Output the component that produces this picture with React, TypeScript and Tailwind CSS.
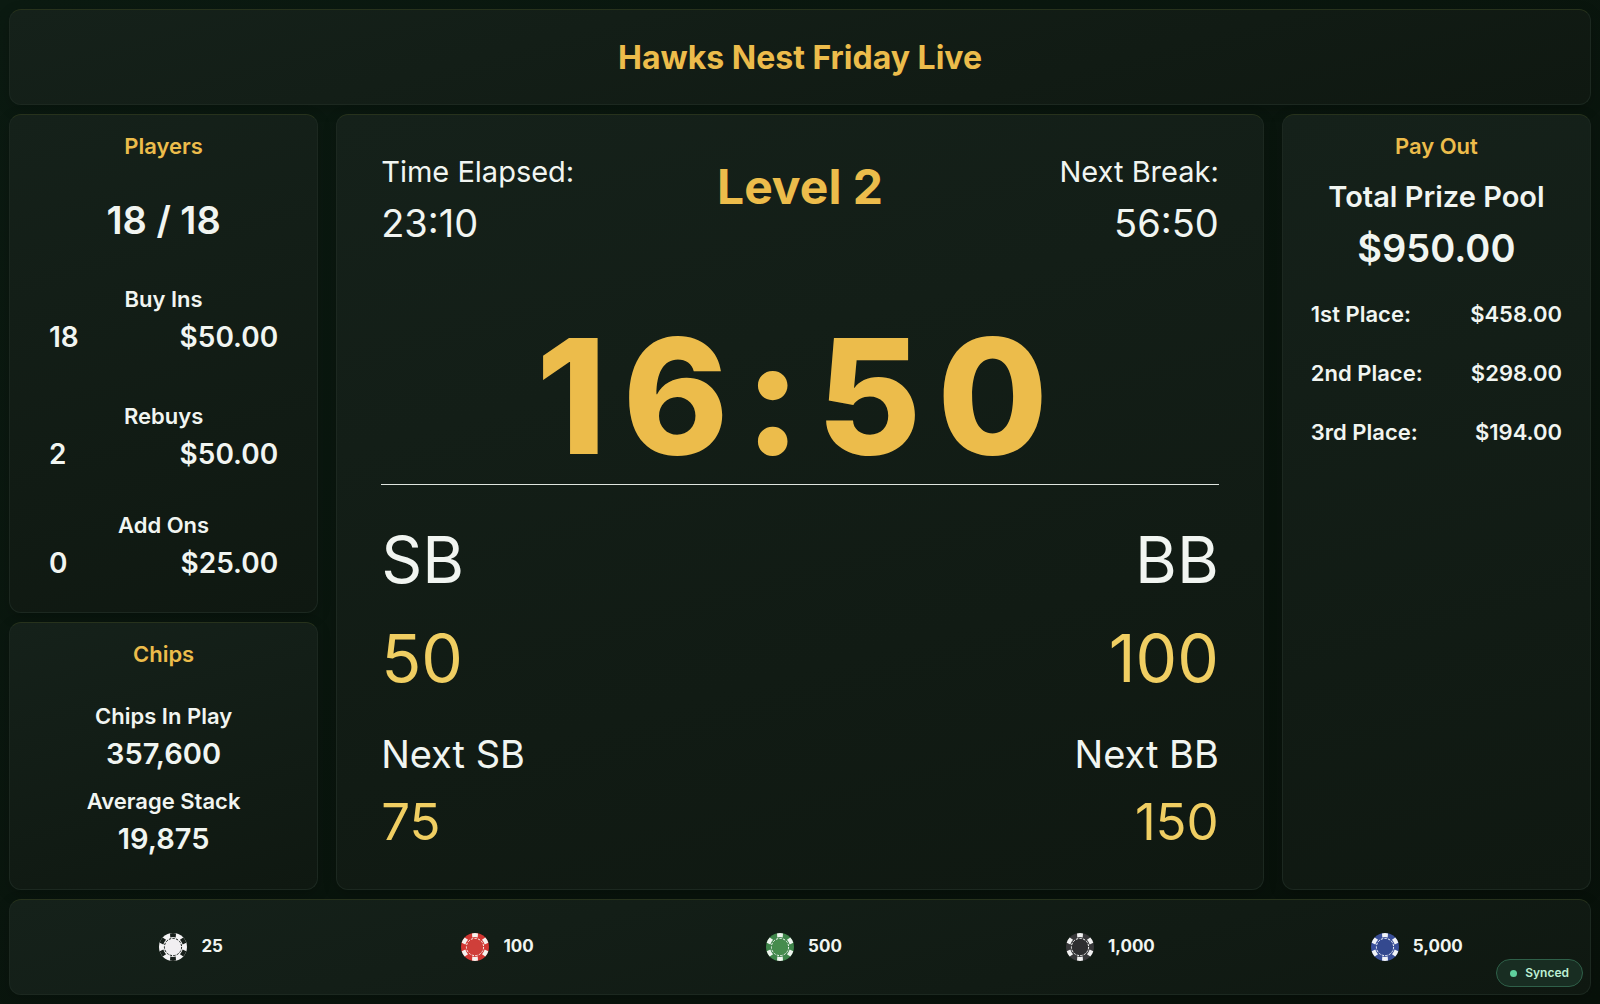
import type { ReactNode } from "react";

const stats = [
  { label: "Buy Ins", count: "18", amount: "$50.00", style: "mt-[38px]" },
  { label: "Rebuys", count: "2", amount: "$50.00", style: "mt-[41px]" },
  { label: "Add Ons", count: "0", amount: "$25.00", style: "mt-[33px]" },
];

const payouts = [
  { place: "1st Place:", amount: "$458.00" },
  { place: "2nd Place:", amount: "$298.00" },
  { place: "3rd Place:", amount: "$194.00" },
];

const chips = [
  { value: "25", body: "#f1eff1", edge: "#f5f4f5", mark: "#18201b" },
  { value: "100", body: "#cf3f3a", edge: "#d23632", mark: "#f6f1ee" },
  { value: "500", body: "#468c4d", edge: "#3f854a", mark: "#eef4ee" },
  { value: "1,000", body: "#2e2e30", edge: "#38383a", mark: "#f1f1f1" },
  { value: "5,000", body: "#34498f", edge: "#3a4f99", mark: "#f1f3f8" },
];

const Card = ({ children, style = "" }: { children: ReactNode; style?: string }) => (
  <section
    className={`rounded-xl border border-[#1c2820] border-t-[#27321c] bg-linear-165 from-[#15211a] to-[#0f1811] shadow-[0_4px_14px_rgba(0,0,0,0.2)] ${style}`}
  >
    {children}
  </section>
);

const CardTitle = ({ children }: { children: ReactNode }) => (
  <h2 className="text-center text-[22px] leading-8 font-semibold text-[#ecbc4b]">{children}</h2>
);

const ChipIcon = ({ body, edge, mark }: { body: string; edge: string; mark: string }) => (
  <svg viewBox="0 0 36 36" className="w-9 h-9" aria-hidden="true">
    <circle cx="18" cy="18" r="14" fill={edge} />
    {[0, 60, 120, 180, 240, 300].map((angle) => (
      <path
        key={angle}
        d="M15 4.4 Q18 3.6 21 4.4 L20.7 8.4 Q18 7.8 15.3 8.4 Z"
        fill={mark}
        transform={`rotate(${angle} 18 18)`}
      />
    ))}
    <circle cx="18" cy="18" r="8" fill={body} />
    <circle
      cx="18"
      cy="18"
      r="8.6"
      fill="none"
      stroke={mark}
      strokeWidth="1"
      strokeDasharray="2.4 1.2"
    />
  </svg>
);

const App = () => {
  return (
    <div className="min-h-screen flex flex-col gap-[9px] p-[9px] pb-[10px] bg-linear-to-br from-[#0b1a11] to-[#08110a] font-['Inter',sans-serif] text-[#f1f5f1]">
      <Card style="flex h-24 items-center justify-center pt-[2px]">
        <h1 className="text-[32px] leading-10 font-bold text-[#ecbc4b]">Hawks Nest Friday Live</h1>
      </Card>

      <main className="grid flex-1 grid-cols-[1fr_3fr_1fr] gap-[18px]">
        <div className="flex flex-col gap-[9px]">
          <Card style="flex-1 px-[39px] pt-[15px] pb-[27px] font-semibold">
            <CardTitle>Players</CardTitle>
            <p className="mt-[33px] text-center text-[38px] leading-[50px]">18 / 18</p>
            {stats.map((item) => (
              <div key={item.label} className={item.style}>
                <p className="text-center text-[22px] leading-8">{item.label}</p>
                <div className="flex justify-between text-[28px] leading-11">
                  <span>{item.count}</span>
                  <span>{item.amount}</span>
                </div>
              </div>
            ))}
          </Card>
          <Card style="px-[39px] pt-[15px] pb-7 text-center font-semibold">
            <CardTitle>Chips</CardTitle>
            <p className="mt-[30px] text-[22px] leading-8">Chips In Play</p>
            <p className="text-[29px] leading-11">357,600</p>
            <p className="mt-[9px] text-[22px] leading-8">Average Stack</p>
            <p className="text-[29px] leading-11">19,875</p>
          </Card>
        </div>

        <Card style="px-11 pt-[35px]">
          <div className="grid grid-cols-3">
            <div>
              <p className="text-[29px] leading-11">Time Elapsed:</p>
              <p className="text-[38px] leading-[58px]">23:10</p>
            </div>
            <h2 className="text-center text-[48px] leading-[74px] font-bold text-[#ecbc4b]">
              Level 2
            </h2>
            <div className="text-right">
              <p className="text-[29px] leading-11">Next Break:</p>
              <p className="text-[38px] leading-[58px]">56:50</p>
            </div>
          </div>
          <p className="mt-16 text-center text-[160px] leading-none font-extrabold tracking-widest text-[#ecbc4b]">
            16:50
          </p>
          <hr className="mt-2 border-[#dfe5df]" />
          <div className="mt-[26px] flex justify-between">
            <div>
              <p className="text-[64px] leading-[98px]">SB</p>
              <p className="text-[66px] leading-[98px] text-[#f0ce62]">50</p>
              <p className="mt-[17px] text-[38px] leading-[60px]">Next SB</p>
              <p className="text-[51px] leading-[76px] text-[#f0ce62]">75</p>
            </div>
            <div className="text-right">
              <p className="text-[64px] leading-[98px]">BB</p>
              <p className="text-[66px] leading-[98px] text-[#f0ce62]">100</p>
              <p className="mt-[17px] text-[38px] leading-[60px]">Next BB</p>
              <p className="text-[51px] leading-[76px] text-[#f0ce62]">150</p>
            </div>
          </div>
        </Card>

        <Card style="px-7 pt-[15px] font-semibold">
          <CardTitle>Pay Out</CardTitle>
          <p className="mt-[13px] text-center text-[29px] leading-11">Total Prize Pool</p>
          <p className="text-center text-[38px] leading-[58px]">$950.00</p>
          <ul className="mt-2 text-[22px] leading-[59px]">
            {payouts.map((item) => (
              <li key={item.place} className="flex justify-between">
                <span>{item.place}</span>
                <span>{item.amount}</span>
              </li>
            ))}
          </ul>
        </Card>
      </main>

      <Card style="grid h-24 grid-cols-5 items-center gap-4 pl-[34px] pr-[30px]">
        {chips.map((chip) => (
          <div key={chip.value} className="flex items-center justify-center gap-[10px]">
            <ChipIcon body={chip.body} edge={chip.edge} mark={chip.mark} />
            <span className="text-[17px] font-bold">{chip.value}</span>
          </div>
        ))}
      </Card>

      <div className="fixed right-[17px] bottom-[17px] flex h-7 items-center gap-2 rounded-full border border-[#2f6049] bg-[#182d22] px-[13px] text-xs font-semibold text-[#bdf0d4]">
        <span className="h-[7px] w-[7px] rounded-full bg-[#5fd09d]" />
        Synced
      </div>
    </div>
  );
};

export default App;
